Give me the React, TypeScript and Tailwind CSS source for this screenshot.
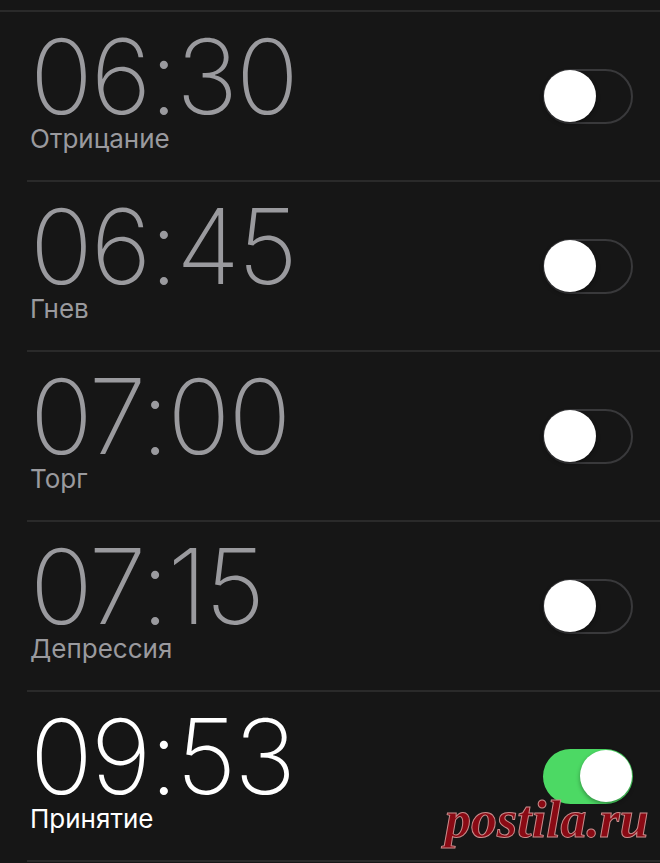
const alarms = [
  { time: '06:30', label: 'Отрицание', on: false },
  { time: '06:45', label: 'Гнев', on: false },
  { time: '07:00', label: 'Торг', on: false },
  { time: '07:15', label: 'Депрессия', on: false },
  { time: '09:53', label: 'Принятие', on: true },
];

function Toggle({ on }: { on: boolean }) {
  return (
    <div
      className={`relative w-[90px] h-[55px] rounded-full ${on ? 'bg-[#4cd964]' : 'border-2 border-[#39393b] bg-transparent'}`}
    >
      <div
        className={`absolute top-1/2 -translate-y-1/2 w-[52px] h-[52px] rounded-full bg-white shadow-[0_2px_4px_rgba(0,0,0,0.35)] ${on ? 'right-[1px]' : 'left-[-1px]'}`}
      />
    </div>
  );
}

export default function App() {
  return (
    <div className="relative w-[660px] h-[863px] overflow-hidden bg-[#161616] font-['Inter',sans-serif]">
      <div className="h-[12px] border-b-2 border-[#2a2a2a]" />
      {alarms.map((a) => (
        <div key={a.time} className="ml-[27px] border-b-2 border-[#2a2a2a]">
          <div className="h-[168px] flex items-center justify-between pl-[3px] pr-[27px]">
            <div className="flex flex-col pb-[4px]">
              <span
                className={`text-[104px] leading-[80px] font-extralight tracking-[-2px] ${a.on ? 'text-white' : 'text-[#9a9a9e]'}`}
              >
                {a.time}
              </span>
              <span className={`text-[26px] leading-[28px] mt-[9px] ${a.on ? 'text-white' : 'text-[#9a9a9e]'}`}>
                {a.label}
              </span>
            </div>
            <Toggle on={a.on} />
          </div>
        </div>
      ))}
      {/* site watermark in the corner */}
      <span className="absolute left-[445px] top-[794px] font-['Liberation_Serif',serif] italic font-bold text-[52px] leading-none text-[#8a0a14] [-webkit-text-stroke:1px_#c98c8c]">
        postila.ru
      </span>
    </div>
  );
}
